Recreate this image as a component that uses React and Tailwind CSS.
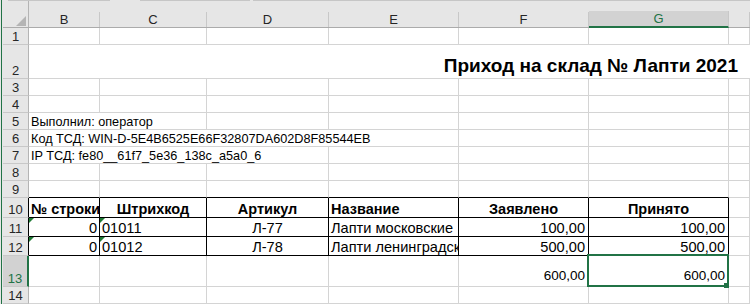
import React from 'react';

const GRID = 'border-r border-b border-[#d4d4d4]';
const TABLE = 'border-r border-b border-black';
const TOP_BLACK = 'border-r border-b border-r-[#d4d4d4] border-b-black';

const Cell = ({ cls = GRID, align = 'justify-start', children, className = '' }) => (
  <div className={`relative flex items-end overflow-hidden whitespace-nowrap px-[2px] ${align} ${cls} ${className}`}>
    {children}
  </div>
);

const ErrorMark = () => (
  <svg width="5" height="5" className="absolute left-0 top-0">
    <polygon points="0,0 5,0 0,5" fill="#1e7b34" />
  </svg>
);

const RowHead = ({ n, cls = 'border-r-[#b4b4b4]', active = false }) => (
  <div
    className={`flex items-end justify-center border-b border-b-[#c8c8c8] text-[13px] leading-[15px] ${
      active ? 'border-r-2 border-r-[#217346] bg-[#d2d2d2] text-[#217346]' : `border-r bg-[#e6e6e6] text-[#262626] ${cls}`
    }`}
  >
    {n}
  </div>
);

const ColHead = ({ label, active = false }) => (
  <div className={`flex flex-col bg-[#e6e6e6] ${active ? '' : 'border-b border-[#ababab]'}`}>
    <div className="h-[11px]" />
    <div
      className={`flex flex-1 items-end justify-center border-r border-r-[#c8c8c8] text-[13px] leading-[15px] ${
        active ? 'border-b-2 border-b-[#217346] bg-[#d2d2d2] text-[#217346]' : 'text-[#262626]'
      }`}
    >
      {label}
    </div>
  </div>
);

const Empty = ({ count }) => Array.from({ length: count }).map((_, i) => <Cell key={i} />);

const HEAD = 'text-[14.5px] font-bold leading-[16px]';
const DATA = 'text-[14.6px] leading-[16px]';
const INFO = 'text-[12.7px] leading-[14px]';

export default function App() {
  return (
    <div className="flex h-[304px] w-[750px] overflow-hidden bg-white font-['Liberation_Sans',Arial,sans-serif] text-black">
      <div className="w-px bg-[#e6e6e6]" />
      <div className="w-px bg-[#217346]" />
      <div className="w-px bg-[#e6e6e6]" />
      <div className="flex flex-1 flex-col">
        {/* top strip */}
        <div className="flex h-px bg-[#e6e6e6]">
          <div className="w-[5px]" />
          <div className="w-[102px] bg-[#c6c6c6]" />
          <div className="w-[30px]" />
          <div className="w-[110px] bg-[#c6c6c6]" />
          <div className="w-[3px]" />
          <div className="flex-1 bg-[#c6c6c6]" />
        </div>

        <div className="grid grid-cols-[26px_71px_107px_122px_130px_130px_140px_21px] grid-rows-[27px_17px_34px_17px_17px_17px_17px_17px_17px_17px_20px_19px_19px_31px_17px]">
          {/* column headers */}
          <div className="flex items-end justify-end border-r border-b border-r-[#b4b4b4] border-b-[#ababab] bg-[#e6e6e6] pr-[2px] pb-px">
            <svg width="10" height="10">
              <polygon points="10,0 10,10 0,10" fill="#b4b4b4" />
            </svg>
          </div>
          <ColHead label="B" />
          <ColHead label="C" />
          <ColHead label="D" />
          <ColHead label="E" />
          <ColHead label="F" />
          <ColHead label="G" active />
          <ColHead label="" />

          {/* 1 */}
          <RowHead n="1" />
          <Empty count={7} />

          {/* 2 */}
          <RowHead n="2" />
          <div className="col-span-7 flex items-end justify-end overflow-hidden whitespace-nowrap border-b border-[#d4d4d4] pr-[12px] pb-[2px] text-[19px] font-bold leading-[21px]">
            Приход на склад № Лапти 2021
          </div>

          {/* 3, 4 */}
          <RowHead n="3" />
          <Empty count={7} />
          <RowHead n="4" />
          <Empty count={7} />

          {/* 5 */}
          <RowHead n="5" />
          <Cell className={`col-span-2 ${INFO}`}>Выполнил: оператор</Cell>
          <Empty count={5} />

          {/* 6 */}
          <RowHead n="6" />
          <Cell className={`col-span-4 ${INFO}`}>Код ТСД: WIN-D-5E4B6525E66F32807DA602D8F85544EB</Cell>
          <Empty count={3} />

          {/* 7 */}
          <RowHead n="7" />
          <Cell className={`col-span-3 ${INFO}`}>IP ТСД: fe80__61f7_5e36_138c_a5a0_6</Cell>
          <Empty count={4} />

          {/* 8 */}
          <RowHead n="8" />
          <Empty count={7} />

          {/* 9 */}
          <RowHead n="9" />
          <Cell cls={TOP_BLACK} />
          <Cell cls={TOP_BLACK} />
          <Cell cls={TOP_BLACK} />
          <Cell cls={TOP_BLACK} />
          <Cell cls={TOP_BLACK} />
          <Cell cls={TOP_BLACK} />
          <Cell />

          {/* 10 */}
          <RowHead n="10" cls="border-r-black" />
          <Cell cls={TABLE} className={HEAD}>№ строки</Cell>
          <Cell cls={TABLE} align="justify-center" className={HEAD}>Штрихкод</Cell>
          <Cell cls={TABLE} align="justify-center" className={HEAD}>Артикул</Cell>
          <Cell cls={TABLE} className={HEAD}>Название</Cell>
          <Cell cls={TABLE} align="justify-center" className={HEAD}>Заявлено</Cell>
          <Cell cls={TABLE} align="justify-center" className={HEAD}>Принято</Cell>
          <Cell />

          {/* 11 */}
          <RowHead n="11" cls="border-r-black" />
          <Cell cls={TABLE} align="justify-end" className={DATA}><ErrorMark />0</Cell>
          <Cell cls={TABLE} className={DATA}><ErrorMark />01011</Cell>
          <Cell cls={TABLE} align="justify-center" className={DATA}>Л-77</Cell>
          <Cell cls={TABLE} className={DATA}>Лапти московские</Cell>
          <Cell cls={TABLE} align="justify-end" className={`pr-[3px] ${DATA}`}>100,00</Cell>
          <Cell cls={TABLE} align="justify-end" className={`pr-[3px] ${DATA}`}>100,00</Cell>
          <Cell />

          {/* 12 */}
          <RowHead n="12" cls="border-r-black" />
          <Cell cls={TABLE} align="justify-end" className={DATA}><ErrorMark />0</Cell>
          <Cell cls={TABLE} className={DATA}><ErrorMark />01012</Cell>
          <Cell cls={TABLE} align="justify-center" className={DATA}>Л-78</Cell>
          <Cell cls={TABLE} className={DATA}>Лапти ленинградские</Cell>
          <Cell cls={TABLE} align="justify-end" className={`pr-[3px] ${DATA}`}>500,00</Cell>
          <Cell cls={TABLE} align="justify-end" className={`pr-[3px] ${DATA}`}>500,00</Cell>
          <Cell />

          {/* 13 */}
          <RowHead n="13" active />
          <Empty count={4} />
          <Cell align="justify-end" className="pr-[3px] pb-[3px] text-[13.5px] leading-[15px]">600,00</Cell>
          <div className="relative flex items-end justify-end whitespace-nowrap border-r border-b border-[#d4d4d4] pr-[3px] pl-[2px] pb-[3px] text-[13.5px] leading-[15px]">
            600,00
            <div className="absolute -top-[2px] -right-[1px] -bottom-[1px] -left-[2px] z-10 border-2 border-[#217346]" />
            <div className="absolute -right-[1px] -bottom-[2px] z-20 h-[5px] w-[5px] bg-[#217346]" />
          </div>
          <Cell />

          {/* 14 */}
          <RowHead n="14" />
          <Empty count={7} />
        </div>
      </div>
    </div>
  );
}
